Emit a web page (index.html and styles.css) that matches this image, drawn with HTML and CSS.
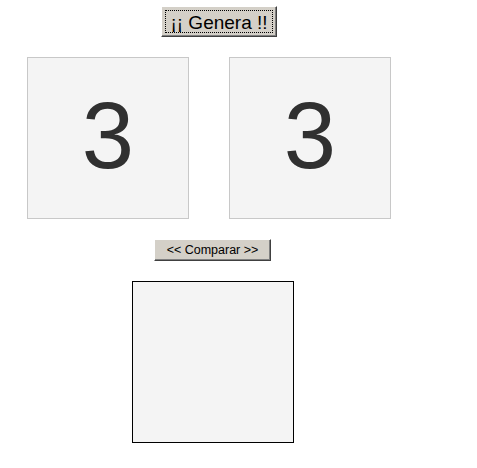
FILE: index.html
```html
<!DOCTYPE html>
<html>
<head>
<meta charset="utf-8">
<link rel="stylesheet" href="styles.css">
</head>
<body>
<div class="page">
  <div class="row row-generate">
    <button class="btn btn-big"><span class="focus">¡¡ Genera !!</span></button>
  </div>
  <div class="row row-cards">
    <div class="card">3</div>
    <div class="card">3</div>
  </div>
  <div class="row row-compare">
    <button class="btn btn-small">&lt;&lt; Comparar &gt;&gt;</button>
  </div>
  <div class="row row-result">
    <div class="result"></div>
  </div>
</div>
</body>
</html>
```
FILE: styles.css
```css
html, body {
  margin: 0;
  padding: 0;
  background: #ffffff;
}
body {
  font-family: "Liberation Sans", Arial, sans-serif;
}
.page {
  display: flex;
  flex-direction: column;
  padding-top: 6px;
}
.row {
  display: flex;
}
.btn {
  margin: 0;
  background: #d4d0c8;
  color: #000;
  font-family: "Liberation Sans", Arial, sans-serif;
  border: 1px solid;
  border-color: #ffffff #404040 #404040 #ffffff;
  box-shadow: inset -1px -1px 0 #808080, inset 1px 1px 0 #d4d0c8;
  border-radius: 0;
  display: flex;
  align-items: center;
  justify-content: center;
  padding: 0;
  box-sizing: border-box;
}
.row-generate {
  padding-left: 161px;
}
.btn-big {
  width: 116px;
  height: 31px;
  font-size: 19px;
  padding: 3px;
}
.focus {
  display: flex;
  align-items: center;
  justify-content: center;
  width: 100%;
  height: 100%;
  outline: 1px dotted #000;
  outline-offset: -1px;
  line-height: 1;
  padding-top: 2px;
  box-sizing: border-box;
}
.row-cards {
  padding-left: 27px;
  margin-top: 20px;
  gap: 40px;
}
.card {
  width: 162px;
  height: 162px;
  box-sizing: border-box;
  border: 1px solid #c8c8c8;
  background: #f4f4f4;
  color: #303030;
  font-size: 94px;
  line-height: 1;
  display: flex;
  align-items: center;
  justify-content: center;
  padding-bottom: 5px;
}
.row-compare {
  padding-left: 154px;
  margin-top: 20px;
}
.btn-small {
  width: 117px;
  height: 22px;
  font-size: 12.5px;
  padding-bottom: 1px;
}
.row-result {
  padding-left: 132px;
  margin-top: 20px;
}
.result {
  width: 162px;
  height: 162px;
  box-sizing: border-box;
  border: 1px solid #000;
  background: #f4f4f4;
}
```
